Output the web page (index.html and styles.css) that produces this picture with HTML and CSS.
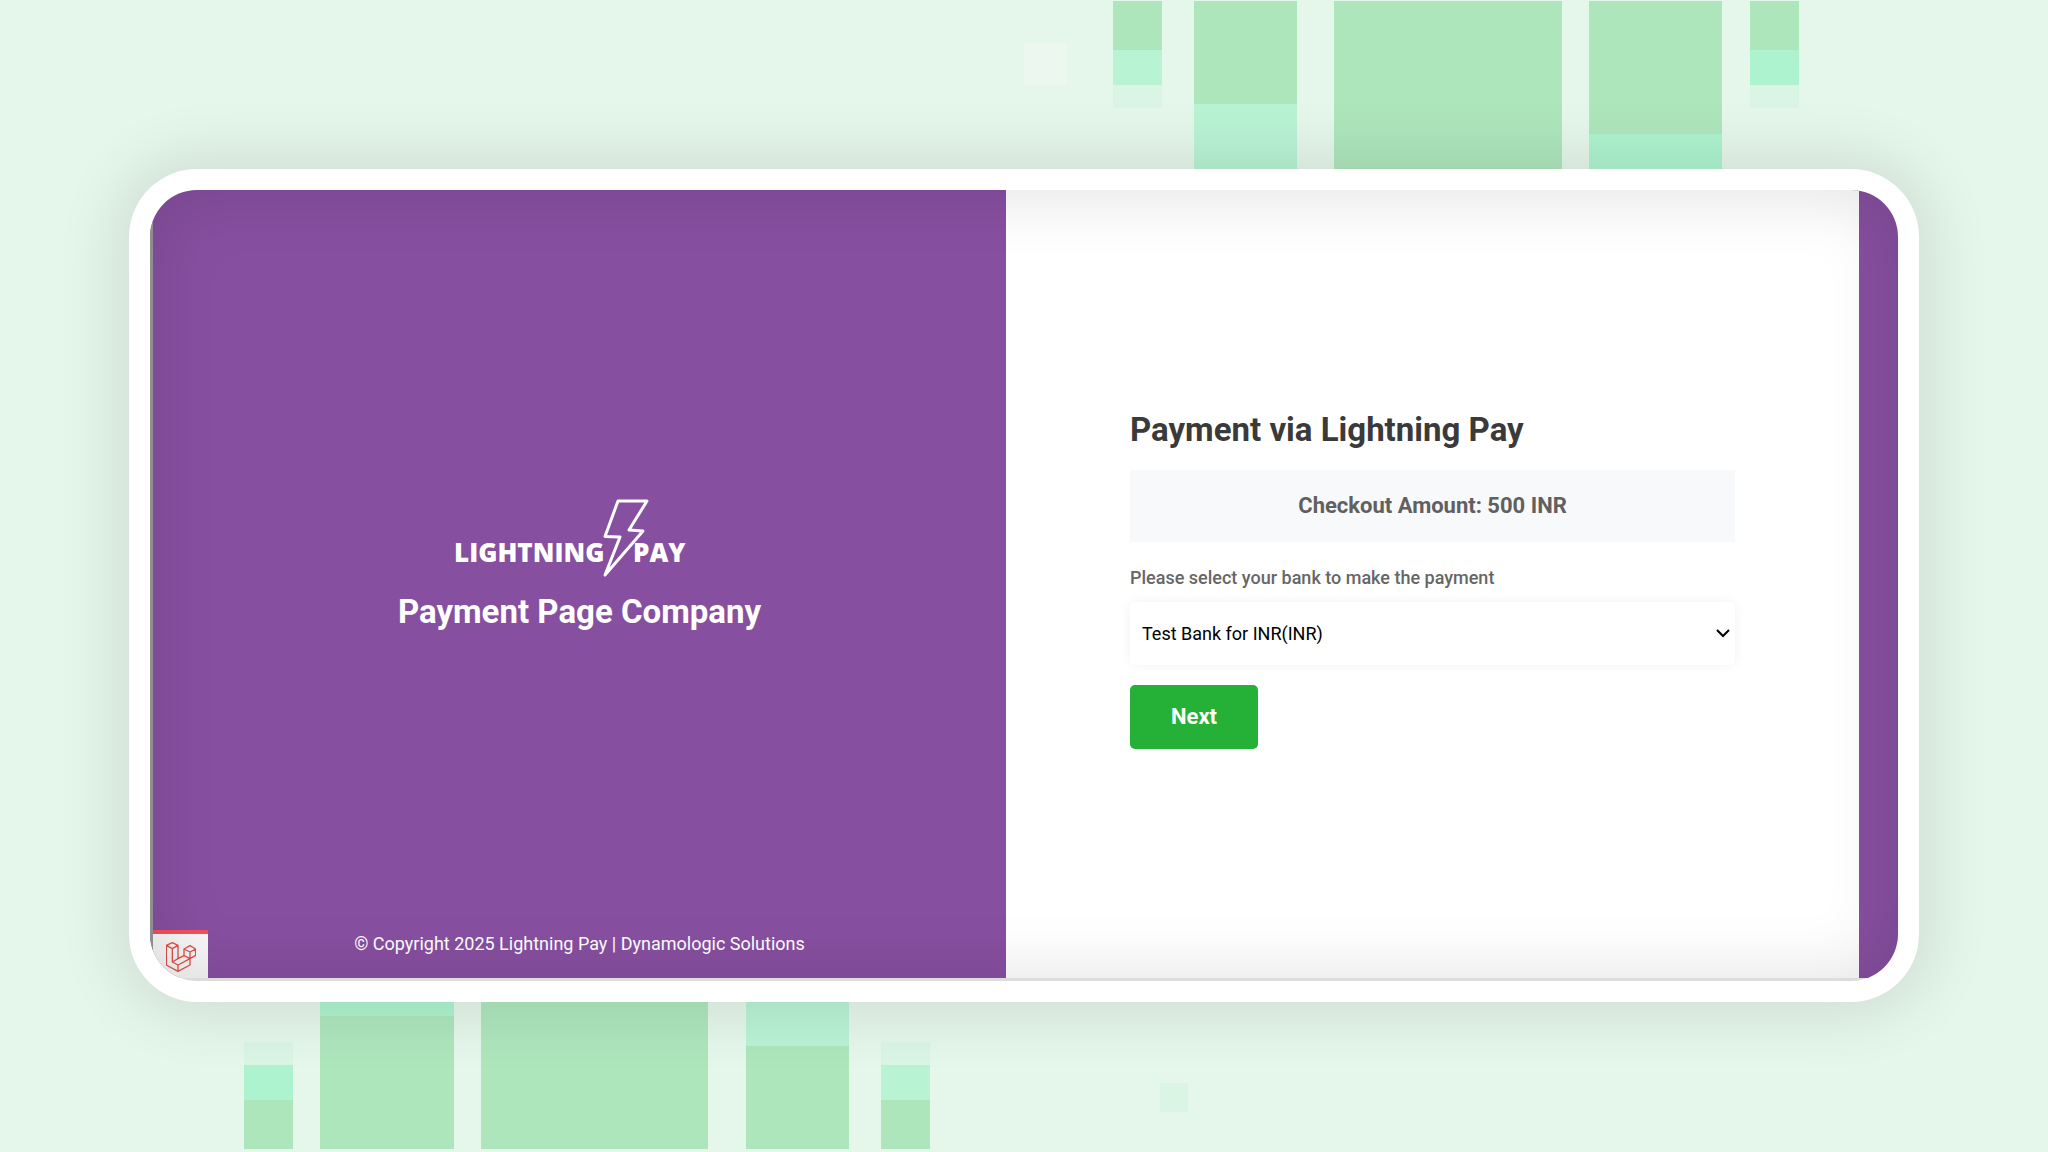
FILE: index.html
```html
<!DOCTYPE html>
<html lang="en">
<head>
    <meta charset="UTF-8">
    <meta name="viewport" content="width=device-width, initial-scale=1.0">
    <title>Payment via Lightning Pay</title>
    <link rel="stylesheet" href="styles.css">
</head>
<body>
    <svg class="bars bars-top" viewBox="0 0 2048 169" preserveAspectRatio="xMidYMin slice" aria-hidden="true">
        <rect class="pale" x="1024" y="43" width="42" height="42"/>
        <g class="green">
            <rect x="1113" y="1" width="49" height="49"/>
            <rect x="1194" y="1" width="103" height="103"/>
            <rect x="1334" y="1" width="228" height="168"/>
            <rect x="1589" y="1" width="133" height="133"/>
            <rect x="1750" y="1" width="49" height="49"/>
        </g>
        <g class="mint">
            <rect x="1113" y="50" width="49" height="35"/>
            <rect x="1194" y="104" width="103" height="65"/>
        </g>
        <g class="mint-strong">
            <rect x="1589" y="134" width="133" height="35"/>
            <rect x="1750" y="50" width="49" height="35"/>
        </g>
        <g class="faint">
            <rect x="1113" y="85" width="49" height="23"/>
            <rect x="1750" y="85" width="49" height="23"/>
        </g>
    </svg>

    <main class="frame">
        <div class="screen">
            <div class="page">
                <section class="brand">
                    <div class="brand-main">
                        <svg class="logo" viewBox="0 0 252 80" role="img" aria-label="Lightning Pay">
                            <text x="0" y="64">LIGHTNING</text>
                            <text x="179" y="64">PAY</text>
                            <path d="M164 3H193L175 32L189 33L151 77L166 39L151 38.500Z"/>
                        </svg>
                        <h1>Payment Page Company</h1>
                    </div>
                    <footer class="brand-footer">
                        <p>© Copyright 2025 Lightning Pay | Dynamologic Solutions</p>
                    </footer>
                    <button class="debugbar" type="button" aria-label="Open debugbar">
                        <svg viewBox="0 0 90 88" aria-hidden="true">
                            <path d="M1 9L19 1L36 9L19 19ZM1 9V68L36 87L72 68V49M19 19V59L36 68L72 49L89 39V20L72 10L54 20V40L36 49V9M54 20L72 29L89 20M72 29V49L54 40M36 68V87M19 59L36 49"/>
                        </svg>
                    </button>
                </section>
                <section class="checkout">
                    <form class="payment">
                        <h2>Payment via Lightning Pay</h2>
                        <p class="amount">Checkout Amount: 500 INR</p>
                        <label for="bank">Please select your bank to make the payment</label>
                        <div class="select">
                            <select id="bank" name="bank">
                                <option selected>Test Bank for INR(INR)</option>
                            </select>
                            <svg viewBox="0 0 14 10" aria-hidden="true"><path d="M1 2L7 8L13 2"/></svg>
                        </div>
                        <button class="next" type="button">Next</button>
                    </form>
                </section>
            </div>
        </div>
    </main>

    <svg class="bars bars-bottom" viewBox="0 0 2048 150" preserveAspectRatio="xMidYMax slice" aria-hidden="true">
        <g class="faint">
            <rect x="244" y="40" width="49" height="23"/>
            <rect x="881" y="40" width="49" height="23"/>
            <rect x="1160" y="81" width="28" height="29"/>
        </g>
        <g class="mint-strong">
            <rect x="244" y="63" width="49" height="35"/>
            <rect x="320" y="0" width="134" height="14"/>
        </g>
        <g class="mint">
            <rect x="746" y="0" width="103" height="44"/>
            <rect x="881" y="63" width="49" height="35"/>
        </g>
        <g class="green">
            <rect x="244" y="98" width="49" height="49"/>
            <rect x="320" y="14" width="134" height="133"/>
            <rect x="481" y="0" width="227" height="147"/>
            <rect x="746" y="44" width="103" height="103"/>
            <rect x="881" y="98" width="49" height="49"/>
        </g>
    </svg>
</body>
</html>
```
FILE: styles.css
```css
* {
    box-sizing: border-box;
}
body {
    margin: 0;
    min-height: 100vh;
    display: flex;
    flex-direction: column;
    font-family: Roboto, Arial, sans-serif;
    background: #e5f6ea;
}
h1, h2, p {
    margin: 0;
}

/* Background bars above and below the frame */
.bars {
    display: block;
    width: 100%;
    flex: none;
}
.bars-top {
    height: 169px;
}
.bars-bottom {
    height: 150px;
}
.green {
    fill: #aee6bc;
}
.mint {
    fill: #b8f3d4;
}
.mint-strong {
    fill: #aef3cf;
}
.faint {
    fill: #daf5e4;
}
.pale {
    fill: #ecf7ef;
}

/* Frame */
.frame {
    position: relative;
    z-index: 1;
    flex: 1;
    display: flex;
    margin: 0 129px;
    padding: 21px;
    background: #fff;
    border-radius: 68px;
    box-shadow: 0 0 60px 16px rgba(0, 0, 0, 0.09);
}
.screen {
    position: relative;
    flex: 1;
    display: flex;
    overflow: hidden;
    border-radius: 47px;
    background: #ececec;
    padding-bottom: 3px;
}
.screen::after {
    content: "";
    position: absolute;
    inset: 0;
    pointer-events: none;
    border-radius: 47px;
    box-shadow: inset 0 0 60px 12px rgba(0, 0, 0, 0.1);
}
.page {
    flex: 1;
    display: grid;
    grid-template-columns: 1fr 1fr;
    background: #874fa0;
    border-left: 3px solid #999;
    padding-right: 39px;
}
.brand, .checkout {
    display: flex;
    flex-direction: column;
    justify-content: center;
}

/* Left side */
.brand {
    position: relative;
    color: #fff;
    text-align: center;
}
.brand-main {
    flex: 1;
    display: flex;
    flex-direction: column;
    align-items: center;
    justify-content: center;
    padding-top: 30px;
}
.logo {
    width: 252px;
    height: 80px;
    margin-bottom: 14px;
}
.logo text {
    font: 800 26px "Open Sans", sans-serif;
    fill: #fff;
}
.logo path {
    fill: none;
    stroke: #fff;
    stroke-width: 3;
    stroke-linejoin: round;
}
.brand h1 {
    font-size: 33px;
    line-height: 40px;
    font-weight: 700;
}
.brand-footer {
    padding: 22px;
    font-size: 18px;
    line-height: 24px;
}
.debugbar {
    position: absolute;
    left: 0;
    bottom: 0;
    width: 55px;
    height: 48px;
    padding: 4px 0 0;
    border: 0;
    border-top: 4px solid #f4515a;
    background: #f8f8f8;
}
.debugbar svg {
    width: 30px;
    height: 30px;
}
.debugbar path {
    fill: none;
    stroke: #e2504a;
    stroke-width: 4;
    stroke-linejoin: round;
}

/* Right side */
.checkout {
    background: #fff;
    padding: 0 124px 10px;
}
.payment {
    display: flex;
    flex-direction: column;
    align-items: flex-start;
}
.payment h2 {
    font-size: 33px;
    line-height: 40px;
    font-weight: 700;
    color: #3a3a3a;
}
.amount {
    width: 100%;
    margin: 20px 0 24px;
    padding: 20px;
    background: #f8f9fb;
    color: #606060;
    font-size: 22px;
    line-height: 32px;
    font-weight: 700;
    text-align: center;
}
.payment label {
    font-size: 18px;
    line-height: 24px;
    font-weight: 500;
    color: #666;
    margin-bottom: 12px;
}
.select {
    display: grid;
    align-items: center;
    width: 100%;
    margin-bottom: 20px;
}
.select select, .select svg {
    grid-area: 1 / 1;
}
.select select {
    appearance: none;
    height: 63px;
    padding: 0 12px;
    border: 0;
    border-radius: 5px;
    background: #fff;
    box-shadow: 0 0 12px rgba(0, 0, 0, 0.06);
    color: #000;
    font: 18px Roboto, Arial, sans-serif;
}
.select svg {
    justify-self: end;
    width: 14px;
    height: 10px;
    margin-right: 5px;
    pointer-events: none;
}
.select path {
    fill: none;
    stroke: #000;
    stroke-width: 2;
}
.next {
    padding: 16px 41px;
    border: 0;
    border-radius: 5px;
    background: #25b037;
    color: #fff;
    font: 700 22px/32px Roboto, Arial, sans-serif;
    cursor: pointer;
}
```
